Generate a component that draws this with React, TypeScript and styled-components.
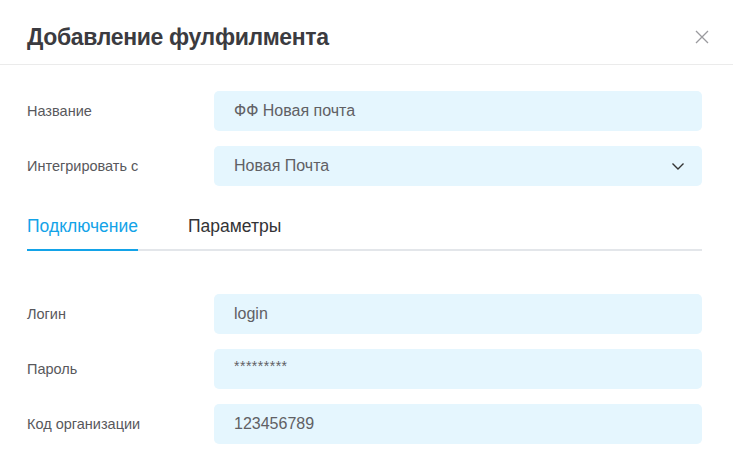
import React from 'react';
import styled, { createGlobalStyle } from 'styled-components';

const GlobalStyle = createGlobalStyle`
  html, body {
    margin: 0;
    padding: 0;
    background: #ffffff;
  }
  body {
    font-family: "Liberation Sans", Arial, sans-serif;
  }
`;

const Modal = styled.div`
  width: 733px;
  height: 476px;
  background: #fff;
  overflow: hidden;
`;

const Header = styled.div`
  height: 65px;
  box-sizing: border-box;
  padding: 0 24px 0 27px;
  display: flex;
  align-items: center;
  justify-content: space-between;
  border-bottom: 1px solid #ebebeb;
`;

const Title = styled.h2`
  margin: 0;
  padding-top: 10px;
  font-size: 23px;
  font-weight: 700;
  color: #3b3b40;
  letter-spacing: -0.35px;
`;

const CloseButton = styled.button`
  border: none;
  background: none;
  padding: 0;
  width: 14px;
  height: 14px;
  margin-top: 9px;
  display: flex;
  cursor: pointer;
`;

const Body = styled.div`
  padding: 26px 31px 0 27px;
  display: flex;
  flex-direction: column;
`;

const Field = styled.div`
  display: flex;
  align-items: center;
  height: 40px;
  margin-bottom: 15px;
`;

const Label = styled.label`
  width: 187px;
  flex-shrink: 0;
  font-size: 14.5px;
  color: #58585c;
`;

const Control = styled.div`
  position: relative;
  flex: 1;
  height: 40px;
`;

const Input = styled.input<{ $small?: boolean }>`
  width: 100%;
  height: 100%;
  box-sizing: border-box;
  border: none;
  outline: none;
  border-radius: 5px;
  background: #e5f6fe;
  padding: 0 20px;
  font-family: "Liberation Sans", Arial, sans-serif;
  font-size: ${(p) => (p.$small ? '14px' : '16px')};
  color: #606064;
  ${(p) => p.$small && 'padding-bottom: 6px; letter-spacing: 0.5px;'}
`;

const Chevron = styled.svg`
  position: absolute;
  right: 17px;
  top: 14px;
`;

const Tabs = styled.div`
  display: flex;
  gap: 50px;
  margin-top: 1px;
  border-bottom: 2px solid #e3e6ea;
  margin-bottom: 43px;
`;

const Tab = styled.div<{ $active?: boolean }>`
  font-size: 17.5px;
  padding: 14px 0 12px;
  margin-bottom: -2px;
  color: ${(p) => (p.$active ? '#13a3e8' : '#333336')};
  border-bottom: 2px solid ${(p) => (p.$active ? '#13a3e8' : 'transparent')};
  cursor: pointer;
`;

export default function App() {
  return (
    <>
      <GlobalStyle />
      <Modal>
        <Header>
          <Title>Добавление фулфилмента</Title>
          <CloseButton aria-label="Закрыть">
            <svg width="14" height="14" viewBox="0 0 14 14">
              <path d="M1 1L13 13M13 1L1 13" stroke="#9a9a9e" strokeWidth="1.3" fill="none" />
            </svg>
          </CloseButton>
        </Header>
        <Body>
          <Field>
            <Label>Название</Label>
            <Control>
              <Input defaultValue="ФФ Новая почта" />
            </Control>
          </Field>
          <Field>
            <Label>Интегрировать с</Label>
            <Control>
              <Input defaultValue="Новая Почта" readOnly />
              <Chevron width="14" height="12" viewBox="0 0 14 12">
                <path d="M1.5 3.5L7 9L12.5 3.5" stroke="#333" strokeWidth="1.4" fill="none" />
              </Chevron>
            </Control>
          </Field>
          <Tabs>
            <Tab $active>Подключение</Tab>
            <Tab>Параметры</Tab>
          </Tabs>
          <Field>
            <Label>Логин</Label>
            <Control>
              <Input defaultValue="login" />
            </Control>
          </Field>
          <Field>
            <Label>Пароль</Label>
            <Control>
              <Input $small defaultValue="*********" />
            </Control>
          </Field>
          <Field>
            <Label>Код организации</Label>
            <Control>
              <Input defaultValue="123456789" />
            </Control>
          </Field>
        </Body>
      </Modal>
    </>
  );
}
